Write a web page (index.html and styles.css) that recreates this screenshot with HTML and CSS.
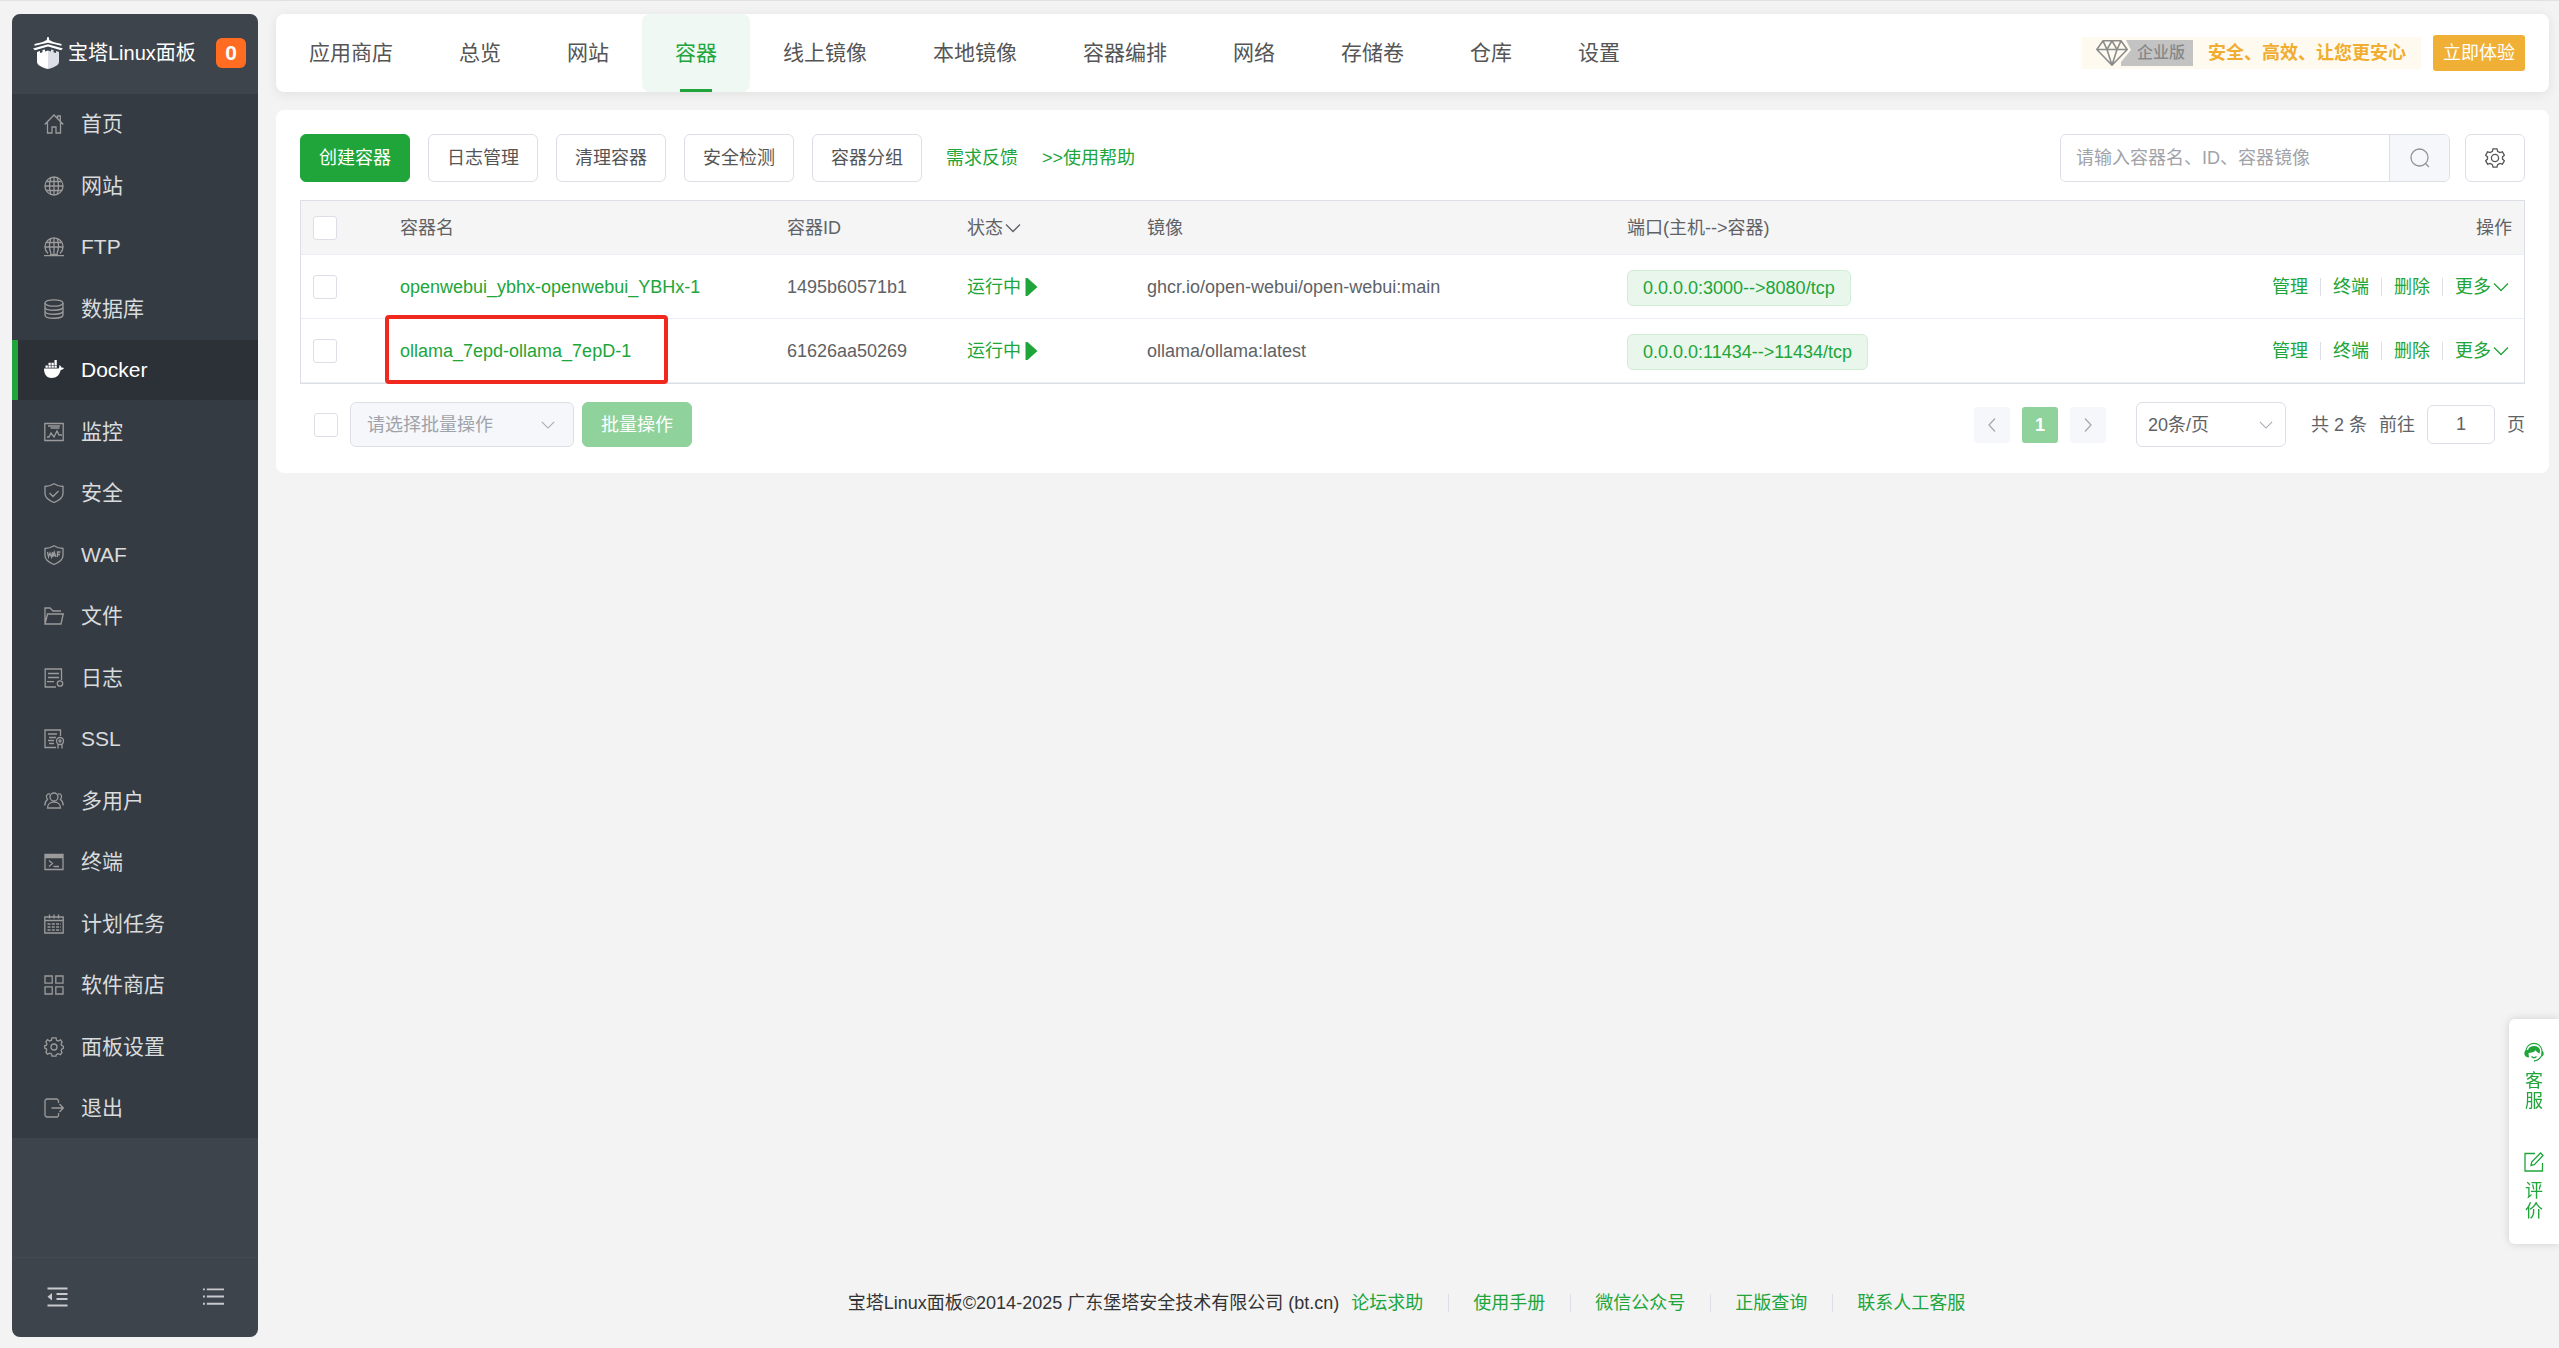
FILE: index.html
```html
<!DOCTYPE html>
<html lang="zh-CN">
<head>
<meta charset="utf-8">
<title>宝塔Linux面板</title>
<link rel="stylesheet" href="styles.css">
</head>
<body>
<svg class="defs" aria-hidden="true">
  <symbol id="i-down" viewBox="0 0 16 16"><path d="M1 4.500l7 7 7-7"/></symbol>
  <symbol id="i-play" viewBox="0 0 12 18"><path d="M0 0h2l10 9-10 9H0z" fill="currentColor" stroke="none"/></symbol>
</svg>
<div class="layout">
  <aside class="sidebar">
    <header class="brand">
      <svg class="brand-logo" viewBox="0 0 30 32" aria-hidden="true"><path fill="#fff" d="M14.300 0h1.400l.6 3 4 2 8.200 2v1.800L15 5.800 1.500 8.800V7l8.200-2 4-2z"/><path fill="#fff" d="M0 11.500 15 7.300l15 4.200-2 1.700-13-3.700-13 3.700z"/><path fill="#fff" d="M4 15l3-1v2l2.500-.7v-2.200l2.500-.7v2l3-.8V32C9 30.500 4 28 4 25z"/><path fill="#dcdfe6" d="M15 13.600l3 .8v-2l2.500.7v2.200l2.500.7v-2l3 1v10c0 3-5 5.500-11 7z"/></svg>
      <span class="brand-name">宝塔Linux面板</span>
      <span class="brand-badge">0</span>
    </header>
    <nav>
      <ul class="menu">
        <li><a href="#"><svg viewBox="0 0 20 20"><path d="M.7 10.500 10 1l9.300 9.500M3.500 8.500V19H8v-6h4v6h4.500V8.500M13.500 4V2h2.800v4.700"/></svg>首页</a></li>
        <li><a href="#"><svg viewBox="0 0 20 20"><circle cx="10" cy="10" r="9"/><path d="M1 10h18M10 1v18M2.500 5.500h15M2.500 14.500h15M7 1.500C5 6 5 14 7 18.500M13 1.500c2 4.500 2 12.500 0 17"/></svg>网站</a></li>
        <li><a href="#"><svg viewBox="0 0 20 20"><path d="M4 16.500a9 9 0 1 1 12 0M1 10h18M10 1v15.500M2.500 5.500h15M7 1.500c-2 4.500-2 10 0 15M13 1.500c2 4.500 2 10 0 15M0 18.700h20M6 17.500h8"/></svg>FTP</a></li>
        <li><a href="#"><svg viewBox="0 0 20 20"><ellipse cx="10" cy="4" rx="9" ry="3.200"/><path d="M1 4v12c0 4.300 18 4.300 18 0V4M1 8c0 4.300 18 4.300 18 0M1 12c0 4.300 18 4.300 18 0"/></svg>数据库</a></li>
        <li class="active"><a href="#"><svg viewBox="0 0 20 20"><path fill="currentColor" stroke="none" d="M0 8.500h14.500c.8 0 .8-2.500 1-3.500 1 .7 1.700 1.500 1.800 2.500 1-.2 2 0 2.700.5-.5 1.300-1.800 2-3.300 2-1.200 5-4 8-9.200 8C2.500 18 0 14 0 8.500zM1.500 5.500h2.300v2.300H1.500zM4.500 5.500h2.300v2.300H4.500zM7.500 5.500h2.300v2.300H7.500zM10.500 5.500h2.300v2.300h-2.300zM4.500 2.800h2.300v2.200H4.500zM7.500 2.800h2.300v2.200H7.500zM10.500 0h2.300v5h-2.300z"/></svg>Docker</a></li>
        <li><a href="#"><svg viewBox="0 0 20 20"><path d="M.8 1.500h18.400v17H.8zM4 4h12M6.500 6h9M3 15h2l2-4 3 4 3-6 2 4h3"/></svg>监控</a></li>
        <li><a href="#"><svg viewBox="0 0 20 20"><path d="M10 .8c3 1.900 6 2.700 9 2.700v7c0 4-4 7-9 9-5-2-9-5-9-9v-7c3 0 6-.8 9-2.700zM5.500 10l3.500 3.500L14.500 8"/></svg>安全</a></li>
        <li><a href="#"><svg viewBox="0 0 20 20"><path d="M10 .8c3 1.900 6 2.700 9 2.700v7c0 4-4 7-9 9-5-2-9-5-9-9v-7c3 0 6-.8 9-2.700zM3.500 7l1 5 1.500-4 1.500 4 1-5M8.500 12l1.700-5 1.800 5M9 10.500h2.500M13.500 12V7h3M13.500 9.500H16"/></svg>WAF</a></li>
        <li><a href="#"><svg viewBox="0 0 20 20"><path d="M1 18V2h5l3 3h8M1 18l2.500-10h15.700L17 18z"/></svg>文件</a></li>
        <li><a href="#"><svg viewBox="0 0 20 20"><path d="M17.500 12V1H1.200v18H12M4 5.500h11M4 9.500h11M3 13.700h7"/><circle cx="16" cy="15.500" r="2.700"/></svg>日志</a></li>
        <li><a href="#"><svg viewBox="0 0 20 20"><path d="M16.500 7V1H1v17.500h11M4 5h9M5 8.500h7M4 11.500h6M5 14.500h5M14 15v4.500M18 15v4.500"/><circle cx="16" cy="12" r="3.500"/><circle cx="16" cy="12" r="1"/></svg>SSL</a></li>
        <li><a href="#"><svg viewBox="0 0 20 20"><circle cx="10" cy="6" r="4"/><path d="M3.500 17c0-8 13-8 13 0zM6 3c-3-.8-5 2.500-2.500 5.500C1.500 10 .8 12 .8 14.500M14 3c3-.8 5 2.500 2.500 5.500 2 1.500 2.700 3.500 2.700 6"/></svg>多用户</a></li>
        <li><a href="#"><svg viewBox="0 0 20 20"><path d="M1 2.500h18v15H1zM1 4h18M1 5.500h18M5 8.500l3.500 3L5 14.500M9.500 14.500H15"/></svg>终端</a></li>
        <li><a href="#"><svg viewBox="0 0 20 20"><path d="M.8 3h18.400v16H.8zM.8 6.500h18.400M5.500.5v4M14.500.5v4M10 .5v4"/><path stroke-dasharray="3 1.300" d="M3.500 10H17M3.500 13H17M3.500 16H17"/></svg>计划任务</a></li>
        <li><a href="#"><svg viewBox="0 0 20 20"><path d="M1 1h7.200v7.200H1zM11.800 1H19v7.200h-7.200zM1 11.800h7.200V19H1zM11.800 11.800H19V19h-7.200z"/></svg>软件商店</a></li>
        <li><a href="#"><svg viewBox="0 0 20 20"><circle cx="10" cy="10" r="3"/><path d="M8 .8h4l.6 2.500 1.700.8 2.300-1.300 1.500 2.300-1 2.200.5 1.200 1.700.6v2.300l-1.700.8-.5 1.200.9 2.200-1.600 2-2.300-1-1.700.8L12 19.200H8l-.5-2.300-1.700-.8-2.400 1.100-1.500-2 .9-2.200-.5-1.200L.7 11V8.800l1.700-.6.5-1.200-1-2.200 1.500-2.200 2.300 1.400 1.700-.8z"/></svg>面板设置</a></li>
        <li><a href="#"><svg viewBox="0 0 20 20"><path d="M14.500 5V2.500L13 1H2.500L1 2.500v15L2.500 19h11l1-1.500V15M7.500 10H19M15.500 6l3.800 4-3.800 4"/></svg>退出</a></li>
      </ul>
    </nav>
    <footer class="side-foot">
      <button type="button" aria-label="收起菜单"><svg viewBox="0 0 20 20"><path class="bold" d="M0 1.500h20M9 7h11M9 12h11M0 18.500h20"/><path fill="currentColor" stroke="none" d="M4.500 6v7.500L0 9.700z"/></svg></button>
      <button type="button" aria-label="菜单列表"><svg viewBox="0 0 22 20"><path class="bold" d="M0 2h2M4 2h18M0 9.500h2M4 9.500h18M0 17h2M4 17h18"/></svg></button>
    </footer>
  </aside>

  <div class="content">
    <header class="topbar">
      <nav class="tabs">
        <a href="#">应用商店</a><a href="#">总览</a><a href="#">网站</a><a href="#" class="active">容器</a><a href="#">线上镜像</a><a href="#">本地镜像</a><a href="#">容器编排</a><a href="#">网络</a><a href="#">存储卷</a><a href="#">仓库</a><a href="#">设置</a>
      </nav>
      <div class="promo">
        <div class="promo-body">
          <svg class="gem" viewBox="0 0 32 26" aria-hidden="true"><path d="M7 .8h18l6.200 8.700L16 25.200.8 9.500zM.8 9.500h30.400M11 9.500l5 15.700 5-15.700M7 .8l4 8.700L16 .8l5 8.700 4-8.700"/></svg>
          <span class="edition">企业版</span>
          <strong class="slogan">安全、高效、让您更安心</strong>
        </div>
        <button type="button" class="try">立即体验</button>
      </div>
    </header>

    <main class="card">
      <div class="toolbar">
        <button type="button" class="btn primary">创建容器</button>
        <button type="button" class="btn">日志管理</button>
        <button type="button" class="btn">清理容器</button>
        <button type="button" class="btn">安全检测</button>
        <button type="button" class="btn">容器分组</button>
        <div class="links"><a href="#">需求反馈</a><a href="#">&gt;&gt;使用帮助</a></div>
        <form class="search">
          <input type="text" aria-label="搜索容器" placeholder="请输入容器名、ID、容器镜像">
          <button type="button" aria-label="搜索"><svg viewBox="0 0 20 20"><circle cx="9.500" cy="9.500" r="8.500"/><path d="M15.500 15.500l3.500 3.500"/></svg></button>
        </form>
        <button type="button" class="btn gear" aria-label="设置"><svg viewBox="0 0 20 20"><circle cx="10" cy="10" r="3.600"/><path d="M8 .8h4l.6 2.500 2.300 1.300 2.500-.8 2 3.400-1.900 1.700v2.200l1.900 1.700-2 3.400-2.500-.8-2.300 1.300-.6 2.500H8l-.6-2.500-2.300-1.300-2.500.8-2-3.400 1.900-1.700V8.900L.6 7.200l2-3.400 2.500.8 2.300-1.300z"/></svg></button>
      </div>

      <table class="grid">
        <colgroup><col class="c-check"><col class="c-name"><col class="c-id"><col class="c-state"><col class="c-image"><col><col class="c-ops"></colgroup>
        <thead>
          <tr><th><input type="checkbox" aria-label="全选"></th><th>容器名</th><th>容器ID</th><th><span class="inline">状态<svg class="chev"><use href="#i-down"/></svg></span></th><th>镜像</th><th>端口(主机--&gt;容器)</th><th class="right">操作</th></tr>
        </thead>
        <tbody>
          <tr>
            <td><input type="checkbox" aria-label="选择 openwebui"></td>
            <td><a href="#">openwebui_ybhx-openwebui_YBHx-1</a></td>
            <td>1495b60571b1</td>
            <td><a href="#" class="inline state">运行中<svg class="play"><use href="#i-play"/></svg></a></td>
            <td>ghcr.io/open-webui/open-webui:main</td>
            <td><span class="tag">0.0.0.0:3000--&gt;8080/tcp</span></td>
            <td><div class="ops"><a href="#">管理</a><a href="#">终端</a><a href="#">删除</a><a href="#" class="inline">更多<svg class="chev"><use href="#i-down"/></svg></a></div></td>
          </tr>
          <tr>
            <td><input type="checkbox" aria-label="选择 ollama"></td>
            <td class="marked"><a href="#">ollama_7epd-ollama_7epD-1</a></td>
            <td>61626aa50269</td>
            <td><a href="#" class="inline state">运行中<svg class="play"><use href="#i-play"/></svg></a></td>
            <td>ollama/ollama:latest</td>
            <td><span class="tag">0.0.0.0:11434--&gt;11434/tcp</span></td>
            <td><div class="ops"><a href="#">管理</a><a href="#">终端</a><a href="#">删除</a><a href="#" class="inline">更多<svg class="chev"><use href="#i-down"/></svg></a></div></td>
          </tr>
        </tbody>
      </table>

      <div class="bottom">
        <input type="checkbox" aria-label="全选批量">
        <div class="select batch"><select aria-label="批量操作" disabled><option>请选择批量操作</option></select><svg><use href="#i-down"/></svg></div>
        <button type="button" class="btn batch-go" disabled>批量操作</button>
        <div class="pager">
          <button type="button" class="page" aria-label="上一页" disabled><svg viewBox="0 0 10 18"><path d="M8 2.500 2 9l6 6.500"/></svg></button>
          <button type="button" class="page current">1</button>
          <button type="button" class="page" aria-label="下一页" disabled><svg viewBox="0 0 10 18"><path d="M2 2.500 8 9l-6 6.500"/></svg></button>
          <div class="select size"><select aria-label="每页条数"><option>20条/页</option></select><svg><use href="#i-down"/></svg></div>
          <span class="total">共 2 条</span>
          <label class="jump">前往<input type="text" value="1">页</label>
        </div>
      </div>
    </main>

    <footer class="page-foot">
      <span>宝塔Linux面板©2014-2025 广东堡塔安全技术有限公司 (bt.cn)</span>
      <nav class="foot-links"><a href="#">论坛求助</a><a href="#">使用手册</a><a href="#">微信公众号</a><a href="#">正版查询</a><a href="#">联系人工客服</a></nav>
    </footer>
  </div>
</div>

<aside class="float">
  <a href="#"><svg viewBox="0 0 20 20"><path fill="currentColor" stroke="none" d="M4 8c1-5.500 11-5.500 12 0l-.3 3.500c-1.700-.5-3-1.500-4-3.200-1.700 1.800-4 2.700-7.200 2.700l.5 4.500C2 15.500.3 13.500.3 11.500c0-1.500.7-2.700 1.700-3.500zM17.500 8c1.500.8 2.200 2 2.200 3.500 0 1.700-1 3-2.700 3.500z"/><path d="M2 8.500C3.500-1 16.500-1 18 8.500M17 14.500c-1.300 2.500-3.500 4-7 4.500M7.500 14.500c1.500 1.500 3.500 1.500 5 0"/></svg><span>客</span><span>服</span></a>
  <a href="#"><svg viewBox="0 0 20 20"><path d="M11 1.500H1V19h17.500v-8M7 13.500l.7-3.500L16.500 1 19 3.500 10.300 12.700z"/></svg><span>评</span><span>价</span></a>
</aside>
</body>
</html>
```
FILE: styles.css
```css
*, ::before, ::after { box-sizing: border-box; }
body {
  margin: 0;
  font: 18px/24px "Liberation Sans", "Noto Sans CJK SC", sans-serif;
  color: #606266;
  background: #f3f3f3;
  border-top: 1px solid #e2e2e2;
}
a { color: #20a53a; text-decoration: none; }
button, input, select { font: inherit; color: inherit; margin: 0; }
button { cursor: pointer; }
ul { list-style: none; margin: 0; padding: 0; }
svg { fill: none; stroke: currentColor; stroke-width: 1.3; }
.defs { display: none; }

.layout { display: flex; gap: 18px; min-height: calc(100vh - 1px); padding: 13px 10px 11px 12px; }

/* Sidebar */
.sidebar {
  flex: none;
  width: 246px;
  display: flex;
  flex-direction: column;
  border-radius: 8px;
  overflow: hidden;
  background: #3e444c;
  color: #d5d7d9;
}
.brand { display: flex; align-items: center; height: 80px; padding: 0 12px 2px 21px; }
.brand-logo { width: 30px; height: 32px; stroke: none; }
.brand-name { margin-left: 5px; font-size: 20px; color: #fff; white-space: nowrap; }
.brand-badge {
  margin-left: auto;
  width: 30px;
  height: 30px;
  border-radius: 6px;
  background: #ff6c22;
  color: #fff;
  font-weight: bold;
  font-size: 21px;
  line-height: 30px;
  text-align: center;
}
.menu {
  display: flex;
  flex-direction: column;
  justify-content: space-between;
  min-height: 1044px;
  background: #353b43;
  font-size: 21px;
}
.menu a {
  display: flex;
  align-items: center;
  gap: 17px;
  height: 60px;
  padding-left: 26px;
  border-left: 6px solid transparent;
  color: #d9dbdd;
}
.menu svg { width: 20px; height: 20px; color: #9b9b9b; }
.menu .active a { background: #2c3037; border-color: #20a53a; color: #fff; }
.menu .active svg { color: #fff; }
.side-foot {
  margin-top: auto;
  display: flex;
  justify-content: space-between;
  height: 80px;
  padding: 0 34px 2px 35px;
  border-top: 1px solid #444a53;
}
.side-foot button { padding: 0; border: 0; background: none; color: #c8cacd; }
.side-foot svg { display: block; height: 20px; width: 21px; }
.bold { stroke-width: 2; }

/* Top bar */
.content { flex: 1; min-width: 0; display: flex; flex-direction: column; }
.topbar {
  display: flex;
  justify-content: space-between;
  align-items: center;
  height: 78px;
  padding-right: 24px;
  border-radius: 8px;
  background: #fff;
  box-shadow: 0 2px 12px rgba(0, 0, 0, .08);
}
.tabs { display: flex; font-size: 21px; }
.tabs a { padding: 0 33px; line-height: 78px; color: #555; white-space: nowrap; }
.tabs .active {
  color: #20a53a;
  border-radius: 8px;
  background: linear-gradient(#20a53a, #20a53a) center bottom / 32px 3px no-repeat #eff8f2;
}
.promo { display: flex; align-items: center; gap: 12px; }
.promo-body { display: flex; align-items: center; height: 32px; padding: 0 15px 0 14px; background: #fefaf0; }
.gem { width: 32px; height: 26px; color: #8c8c8c; stroke-width: 1.6; }
.edition {
  margin-left: -7px;
  padding: 0 8px 0 16px;
  height: 26px;
  line-height: 26px;
  font-size: 16px;
  font-weight: 500;
  color: #888;
  background: #c3c3c3;
  clip-path: polygon(5px 0, 100% 0, 100% 100%, 0 100%, 0 22px, 10px 10px);
}
.slogan { margin-left: 15px; color: #f0ad30; white-space: nowrap; }
.try { height: 36px; padding: 0 10px; border: 0; border-radius: 3px; background: #f0b035; color: #fff; white-space: nowrap; }

/* Card */
.card {
  margin-top: 18px;
  padding: 24px 24px 26px;
  border-radius: 8px;
  background: #fff;
}
.toolbar { display: flex; gap: 18px; margin-bottom: 18px; }
.btn {
  height: 48px;
  padding: 0 18px;
  border: 1px solid #dcdfe6;
  border-radius: 6px;
  background: #fff;
  color: #555;
  white-space: nowrap;
}
.primary { border-color: #20a53a; background: #20a53a; color: #fff; }
.links { display: flex; gap: 24px; align-items: center; padding-left: 6px; }
.search { display: flex; width: 390px; height: 48px; margin-left: auto; margin-right: -3px; border: 1px solid #dcdfe6; border-radius: 6px; overflow: hidden; }
.search input { flex: 1; min-width: 0; padding: 0 15px; border: 0; outline: 0; background: #fff; }
.search input::placeholder { color: #a0a3a9; }
.search button { width: 60px; padding: 0; border: 0; border-left: 1px solid #dcdfe6; background: #f5f7fa; color: #909399; }
.search svg, .gear svg { display: block; width: 20px; height: 20px; margin: auto; }
.gear { width: 60px; padding: 0; }

input[type="checkbox"] {
  appearance: none;
  display: block;
  width: 24px;
  height: 24px;
  border: 1px solid #dcdfe6;
  border-radius: 3px;
  background: #fff;
}

.grid { width: 100%; table-layout: fixed; border-collapse: separate; border-spacing: 0; border: 1px solid #dcdfe6; }
.grid th, .grid td { padding: 0 12px; text-align: left; font-weight: normal; white-space: nowrap; border-bottom: 1px solid #ebeef5; }
.grid th { height: 54px; background: #f5f5f5; }
.grid td { height: 64px; }
.c-check { width: 87px; }
.c-name { width: 387px; }
.c-id, .c-state { width: 180px; }
.c-image { width: 480px; }
.c-ops { width: 300px; }
.grid .right { text-align: right; }
.inline { display: inline-flex; align-items: center; }
.chev { width: 16px; height: 16px; margin-left: 2px; }
.state { gap: 4px; }
.play { width: 13px; height: 18px; }
.tag {
  display: inline-block;
  height: 36px;
  margin-top: 2px;
  padding: 0 15px;
  line-height: 34px;
  border: 1px solid #d2edd8;
  border-radius: 6px;
  background: #e9f6eb;
  color: #20a53a;
}
.ops { display: flex; justify-content: flex-end; padding-right: 3px; }
.ops a + a { position: relative; margin-left: 12px; padding-left: 13px; }
.ops a + a::before { content: ""; position: absolute; left: 0; top: 3px; height: 18px; border-left: 1px solid #dcdfe6; }
/* Highlight frame over the container name */
.marked { position: relative; }
.marked::after {
  content: "";
  position: absolute;
  left: -3px;
  top: -4px;
  width: 283px;
  height: 69px;
  border: 4px solid #f0281e;
  border-radius: 4px;
}

/* Batch row and pagination */
.bottom { display: flex; align-items: center; height: 45px; margin-top: 18px; padding-left: 14px; }
.select { position: relative; height: 45px; }
.select select {
  appearance: none;
  width: 100%;
  height: 100%;
  padding: 0 36px 0 11px;
  border: 1px solid #dcdfe6;
  border-radius: 6px;
  background: #fff;
  opacity: 1;
}
.select svg { position: absolute; right: 13px; top: 16px; width: 14px; height: 14px; color: #a8abb2; pointer-events: none; }
.batch { width: 224px; margin-left: 12px; }
.batch select { padding-left: 16px; background: #f5f7fa; color: #a0a3a9; }
.batch svg { right: 19px; }
.batch-go { height: 45px; margin-left: 8px; border-color: #8fd29c; background: #8fd29c; color: #fff; }
.pager { display: flex; align-items: center; gap: 12px; margin-left: auto; white-space: nowrap; }
.page { width: 36px; height: 36px; padding: 0; border: 0; border-radius: 3px; background: #f5f7fa; color: #a8abb2; }
.page svg { display: block; width: 10px; height: 18px; margin: auto; }
.current { background: #8fd29c; color: #fff; font-weight: bold; }
.size { width: 150px; margin-left: 18px; }
.total { margin-left: 13px; }
.jump { display: flex; align-items: center; gap: 12px; }
.jump input { width: 68px; height: 39px; padding: 0; border: 1px solid #dcdfe6; border-radius: 6px; text-align: center; }

/* Footer */
.page-foot { display: flex; justify-content: center; gap: 12px; margin-top: auto; padding: 0 12px 22px 0; color: #333; white-space: nowrap; }
.foot-links { display: flex; }
.foot-links a + a { margin-left: 25px; padding-left: 25px; background: linear-gradient(#dcdfe6, #dcdfe6) left center / 1px 18px no-repeat; }

/* Floating service panel */
.float {
  position: fixed;
  right: 0;
  bottom: 104px;
  width: 50px;
  padding: 23px 0;
  display: flex;
  flex-direction: column;
  gap: 41px;
  border-radius: 6px 0 0 6px;
  background: #fff;
  box-shadow: 0 0 8px rgba(0, 0, 0, .15);
}
.float a { display: flex; flex-direction: column; align-items: center; line-height: 20px; }
.float svg { width: 20px; height: 20px; margin-bottom: 9px; }
```
